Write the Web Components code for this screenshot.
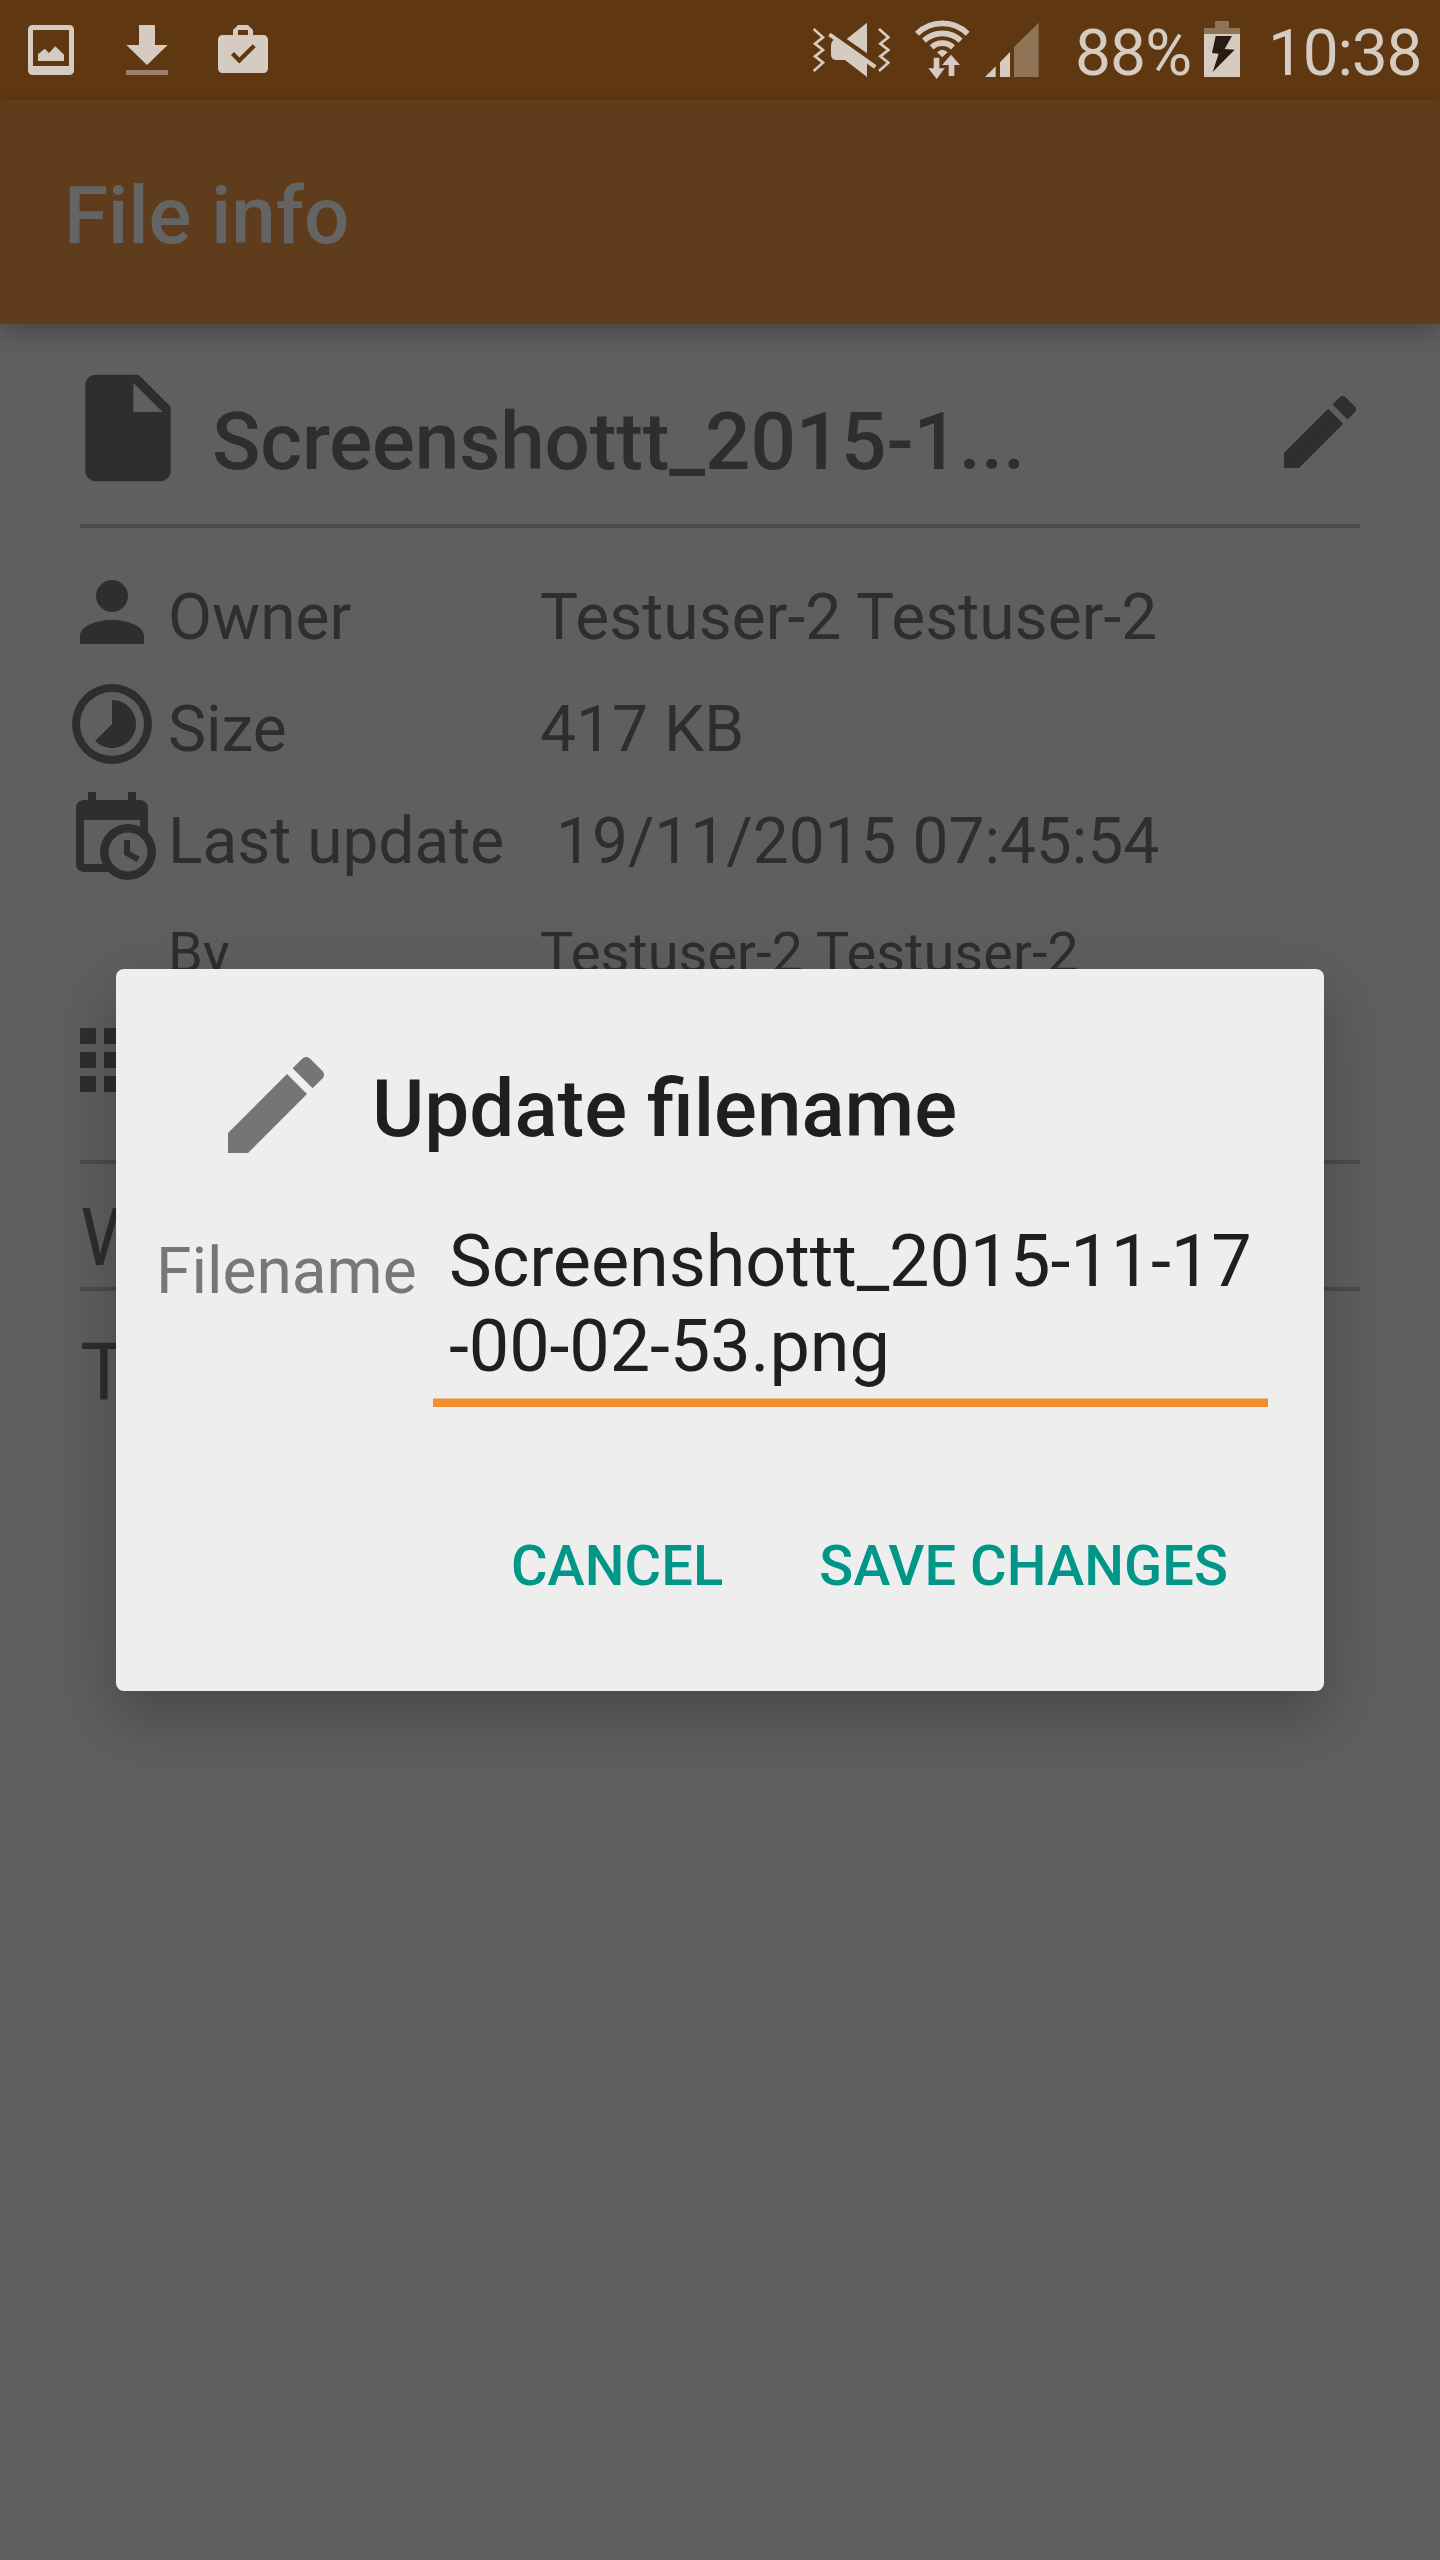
<!DOCTYPE html>
<html lang="en">
<head>
<meta charset="utf-8">
<title>File info</title>
<style>
html,body{margin:0;padding:0;height:2560px;overflow:hidden;background:#5f5f5f}
body{font-family:Roboto,"Noto Sans",sans-serif;width:1440px;position:relative}
</style>
</head>
<body>
<file-info-screen></file-info-screen>
<script>
const ICONS = {
  file: 'M13,9V3.5L18.5,9M6,2C4.89,2 4,2.89 4,4V20A2,2 0 0,0 6,22H18A2,2 0 0,0 20,20V8L14,2H6Z',
  pencil: 'M20.71,7.04C21.1,6.65 21.1,6 20.71,5.63L18.37,3.29C18,2.9 17.35,2.9 16.96,3.29L15.12,5.12L18.87,8.87M3,17.25V21H6.75L17.81,9.93L14.06,6.18L3,17.25Z',
  person: 'M12,4A4,4 0 0,1 16,8A4,4 0 0,1 12,12A4,4 0 0,1 8,8A4,4 0 0,1 12,4M12,14C16.42,14 20,15.79 20,18V20H4V18C4,15.79 7.58,14 12,14Z',
  timelapse: 'M16.24,16.24C13.9,18.59 10.1,18.59 7.76,16.24L12,12V6A6,6 0 0,1 16.24,16.24M12,2A10,10 0 0,0 2,12A10,10 0 0,0 12,22A10,10 0 0,0 22,12A10,10 0 0,0 12,2M12,20A8,8 0 0,1 4,12A8,8 0 0,1 12,4A8,8 0 0,1 20,12A8,8 0 0,1 12,20Z',
  calendar: 'M15,13H16.5V15.82L18.94,17.23L18.19,18.53L15,16.69V13M19,8H5V19H9.67C9.24,18.09 9,17.07 9,16A7,7 0 0,1 16,9C17.07,9 18.09,9.24 19,9.67V8M5,21C3.89,21 3,20.1 3,19V5C3,3.89 3.89,3 5,3H6V1H8V3H16V1H18V3H19A2,2 0 0,1 21,5V11.1C22.24,12.36 23,14.09 23,16A7,7 0 0,1 16,23C14.09,23 12.36,22.24 11.1,21H5M16,11.15A4.85,4.85 0 0,0 11.15,16C11.15,18.68 13.32,20.85 16,20.85A4.85,4.85 0 0,0 20.85,16C20.85,13.32 18.68,11.15 16,11.15Z',
  grid: 'M4,4H8V8H4ZM10,4H14V8H10ZM16,4H20V8H16ZM4,10H8V14H4ZM10,10H14V14H10ZM16,10H20V14H16ZM4,16H8V20H4ZM10,16H14V20H10ZM16,16H20V20H16Z'
};
function define(name, html) {
  customElements.define(name, class extends HTMLElement {
    constructor() {
      super();
      this.attachShadow({mode: 'open'}).innerHTML = html;
    }
  });
}

customElements.define('md-icon', class extends HTMLElement {
  constructor() {
    super();
    const size = this.getAttribute('size') || 96;
    this.attachShadow({mode: 'open'}).innerHTML = `
      <style>:host{display:block;flex:none;width:${size}px;height:${size}px}svg{display:block;fill:currentColor}</style>
      <svg width="${size}" height="${size}" viewBox="0 0 24 24"><path d="${ICONS[this.getAttribute('name')]}"/></svg>`;
  }
});

define('status-bar', `
  <style>
    :host{display:flex;justify-content:space-between;height:100px;box-sizing:border-box;background:#5f3711;color:#d6cbc1;padding-left:28px}
    .group{display:flex;align-items:flex-start}
    svg{display:block;flex:none;fill:currentColor}
    .notes svg{margin-top:25px}
    .text{font-size:64px;line-height:107px;font-weight:400;white-space:nowrap;flex:none}
    .percent{width:129px;margin-left:36px;letter-spacing:-.9px}
    .time{width:172px;margin-left:28px;letter-spacing:-1.2px}
  </style>
  <div class="group notes">
    <svg width="46" height="50" viewBox="0 0 46 50"><path fill-rule="evenodd" d="M4.500,0H41.500A4.500,4.500 0 0 1 46,4.500V45.500A4.500,4.500 0 0 1 41.500,50H4.500A4.500,4.500 0 0 1 0,45.500V4.500A4.500,4.500 0 0 1 4.500,0ZM5,5V41H41V5Z"/><path d="M10,36V29.300L16.700,23.700L21,28L27.300,21.300L36,29.700V36Z"/></svg>
    <svg style="margin-left:52px" width="42" height="50" viewBox="0 0 42 50"><path d="M13,0H29V20H41.700L21,40L.3,20H13Z"/><path fill="#9a8068" d="M0,45H42V50H0Z"/></svg>
    <svg style="margin-left:50px" width="50" height="48" viewBox="0 0 50 48"><path fill-rule="evenodd" d="M15,10V5L20,0H30L35,5V10H45.500A4.500,4.500 0 0 1 50,14.500V43.500A4.500,4.500 0 0 1 45.500,48H4.500A4.500,4.500 0 0 1 0,43.500V14.500A4.500,4.500 0 0 1 4.500,10ZM20,5V10H30V5Z"/><path d="M14.500,28.500L21.300,35.500L36.200,20.800" fill="none" stroke="#5f3711" stroke-width="4.300"/></svg>
  </div>
  <div class="group">
    <svg style="margin-top:22px" width="78" height="56" viewBox="36 36 234 168">
      <g fill="none" stroke="currentColor" stroke-width="8"><path d="M41,57L69,82L45,101L69,120L45,139L69,158L41,183"/><path d="M237,57L265,82L241,101L265,120L241,139L265,158L237,183"/><path stroke-width="12" d="M88,73L226,171"/></g>
      <path d="M201,38V130L140,87ZM104,87L201,156V201L135,150H108Q93,148 93,134V106Q94,94 104,87Z"/>
    </svg>
    <svg style="margin:19px 0 0 24px" width="57" height="61" viewBox="342 27 171 183">
      <g fill="none" stroke="currentColor" stroke-width="17"><path d="M351,71A109,109 0 0 1 503,71"/><path d="M372,92A80,80 0 0 1 482,92"/><path d="M395,112A47,47 0 0 1 459,112"/></g>
      <path d="M411,127Q427,112 443,127L427,142ZM401,143H418V175H434L410,207L385,175H401ZM453,134L480,165H463V198H446V165H426Z"/>
    </svg>
    <svg style="margin:22px 0 0 14px" width="54" height="56" viewBox="555 36 162 168"><path d="M555,201L587,169V201ZM600,201V157L630,126V201Z"/><path fill="#8f7457" d="M642,201V111L716,38V201Z"/></svg>
    <div class="text percent">88%</div>
    <svg style="margin-top:21px" width="36" height="56" viewBox="462 33 108 168"><path fill="#8f7457" d="M495,33H537V54H570V72H462V54H495Z"/><path d="M462,72H570V201H462Z"/><path fill="#281c12" d="M497,78H546L524,117L554,119L488,186L506,131L486,129Z"/></svg>
    <div class="text time">10:38</div>
  </div>`);

define('app-toolbar', `
  <style>
    :host{display:block;box-sizing:border-box;height:224px;padding:16px 64px 0;background:#5f3c1c;color:#646464;font-size:80px;font-weight:500;line-height:200px;letter-spacing:-.1px;box-shadow:0 10px 22px -2px rgba(0,0,0,.27)}
  </style><slot></slot>`);

define('info-row', `
  <style>
    :host{display:flex;height:112px;font-size:64px;line-height:108px;white-space:nowrap}
    .icon{width:104px;flex:none}
    .label{width:372px;flex:none}
    .value{letter-spacing:.07px}
    :host([small]){font-size:56px;line-height:107px}
    :host([small]) .value{letter-spacing:0}
    :host([wide]) .label{width:388px}
    :host([wide]) .value{letter-spacing:0}
  </style>
  <div class="icon"><slot name="icon"></slot></div>
  <div class="label"><slot name="label"></slot></div>
  <div class="value"><slot></slot></div>`);

define('line-divider', `<style>:host{display:block;height:4px;margin:0 80px;background:#4c4c4c}</style>`);

define('flat-button', `
  <style>:host{display:block;color:#009688;font-size:56px;font-weight:500;line-height:100px;letter-spacing:.08px;white-space:nowrap}</style>
  <slot></slot>`);

define('text-field', `
  <style>
    :host{display:block;box-sizing:border-box;width:835px;padding-left:16px;padding-bottom:18px;font-size:72px;line-height:85px;letter-spacing:-.1px;color:#1f1f1f;white-space:nowrap;background:linear-gradient(#f2c08c 1px,#f28e2c 1px) 0 100%/100% 9px no-repeat}
  </style><slot></slot>`);

define('update-dialog', `
  <style>
    :host{display:block;position:absolute;left:116px;top:969px;width:1208px;height:722px;box-sizing:border-box;padding-top:72px;border-radius:8px;background:#eee;box-shadow:0 24px 64px rgba(0,0,0,.27)}
    header{display:flex;height:128px;padding-left:96px;color:#757575}
    h2{margin:0 0 0 32px;padding-top:7px;font-size:80px;line-height:123px;font-weight:500;color:#1f1f1f;white-space:nowrap}
    .form{display:flex;margin-top:50px;padding-left:40px}
    label{width:277px;flex:none;font-size:64px;line-height:106px;color:#777}
    .actions{display:flex;justify-content:flex-end;gap:96px;margin-top:109px;padding-right:96px}
  </style>
  <header><md-icon name="pencil" size="128"></md-icon><h2>Update filename</h2></header>
  <div class="form"><label>Filename</label><text-field>Screenshottt_2015-11-17<br>-00-02-53.png</text-field></div>
  <div class="actions"><flat-button>CANCEL</flat-button><flat-button>SAVE CHANGES</flat-button></div>`);

define('file-info-screen', `
  <style>
    :host{display:flex;flex-direction:column;width:1440px;height:2560px;background:#5f5f5f;color:#2e2e2e;overflow:hidden}
    .head{display:flex;height:200px;box-sizing:border-box;padding:40px 72px 0 64px}
    .head h1{flex:1;margin:0 0 0 20px;font-size:80px;line-height:157px;letter-spacing:-.13px;font-weight:500;white-space:nowrap}
    .head .edit{margin-top:20px}
    .rows{padding:36px 64px 0;height:632px;box-sizing:border-box}
    .section{font-size:80px;line-height:101px;height:123px;box-sizing:border-box;padding:24px 80px 0}
    .section.last{line-height:125px;padding-top:20px}
  </style>
  <status-bar></status-bar>
  <app-toolbar>File info</app-toolbar>
  <div class="head"><md-icon name="file" size="128"></md-icon><h1>Screenshottt_2015-1...</h1><md-icon class="edit" name="pencil"></md-icon></div>
  <line-divider></line-divider>
  <div class="rows">
    <info-row><md-icon slot="icon" name="person"></md-icon><span slot="label">Owner</span>Testuser-2 Testuser-2</info-row>
    <info-row><md-icon slot="icon" name="timelapse"></md-icon><span slot="label">Size</span>417 KB</info-row>
    <info-row wide><md-icon slot="icon" name="calendar"></md-icon><span slot="label">Last update</span>19/11/2015 07:45:54</info-row>
    <info-row small><span slot="label">By</span>Testuser-2 Testuser-2</info-row>
    <info-row><md-icon slot="icon" name="grid"></md-icon></info-row>
  </div>
  <line-divider></line-divider>
  <div class="section">W</div>
  <line-divider></line-divider>
  <div class="section last">T</div>
  <update-dialog></update-dialog>`);
</script>
</body>
</html>
